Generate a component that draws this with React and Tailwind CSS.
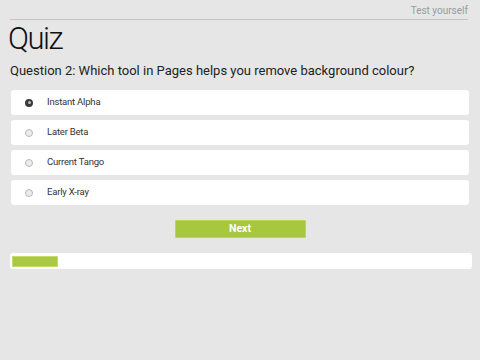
import { useState } from "react";

const OPTIONS = ["Instant Alpha", "Later Beta", "Current Tango", "Early X-ray"];

// Small radio dot, dark when picked
function Radio({ checked }) {
  return checked ? (
    <span className="flex h-[8px] w-[8px] items-center justify-center rounded-full bg-[#3a3a3a]">
      <span className="h-[3px] w-[3px] rounded-full bg-[#bdbdbd]" />
    </span>
  ) : (
    <span className="h-[8px] w-[8px] rounded-full border border-[#b8b8b8] bg-[#ececec]" />
  );
}

export default function App() {
  const [picked, setPicked] = useState(0);

  return (
    <div
      className="h-[360px] w-[480px] overflow-hidden bg-[#e6e6e6] text-[#222]"
      style={{ fontFamily: "Roboto, sans-serif" }}
    >
      {/* Header strip */}
      <div className="mx-[10px] mr-[12px] flex h-[20px] items-center justify-end border-b border-[#c4c4c4] pt-[1px]">
        <span className="text-[10px] text-[#9a9a9a]">Test yourself</span>
      </div>

      {/* Title */}
      <h1 className="ml-[8px] mt-[1px] h-[36px] text-[31px] leading-[36px] font-light tracking-[-1.5px] text-[#111]">
        Quiz
      </h1>

      <p className="ml-[10px] mt-[5px] whitespace-nowrap text-[13px] leading-[18px] text-[#222]">
        Question 2: Which tool in Pages helps you remove background colour?
      </p>

      {/* Answer rows */}
      <div className="ml-[11px] mr-[11px] mt-[10px] flex flex-col gap-[5px]">
        {OPTIONS.map((opt, i) => (
          <button
            key={opt}
            onClick={() => setPicked(i)}
            className="flex h-[25px] items-center rounded-[3px] bg-white text-left"
          >
            <span className="flex w-[36px] justify-center">
              <Radio checked={picked === i} />
            </span>
            <span className="text-[9.5px] tracking-[-0.2px] text-[#333]">{opt}</span>
          </button>
        ))}
      </div>

      {/* Next */}
      <div className="mt-[15px] flex justify-center">
        <button className="h-[18px] w-[131px] rounded-[1px] border border-[#b9d65a] bg-[#a7c83d] text-[10.5px] font-bold text-white">
          Next
        </button>
      </div>

      {/* Progress */}
      <div className="ml-[10px] mr-[8px] mt-[15px] flex h-[16px] items-center rounded-[3px] bg-white px-[2px]">
        <div className="h-[11px] w-[46px] border border-[#c4dc6a] bg-[#a9c943]" />
      </div>
    </div>
  );
}
